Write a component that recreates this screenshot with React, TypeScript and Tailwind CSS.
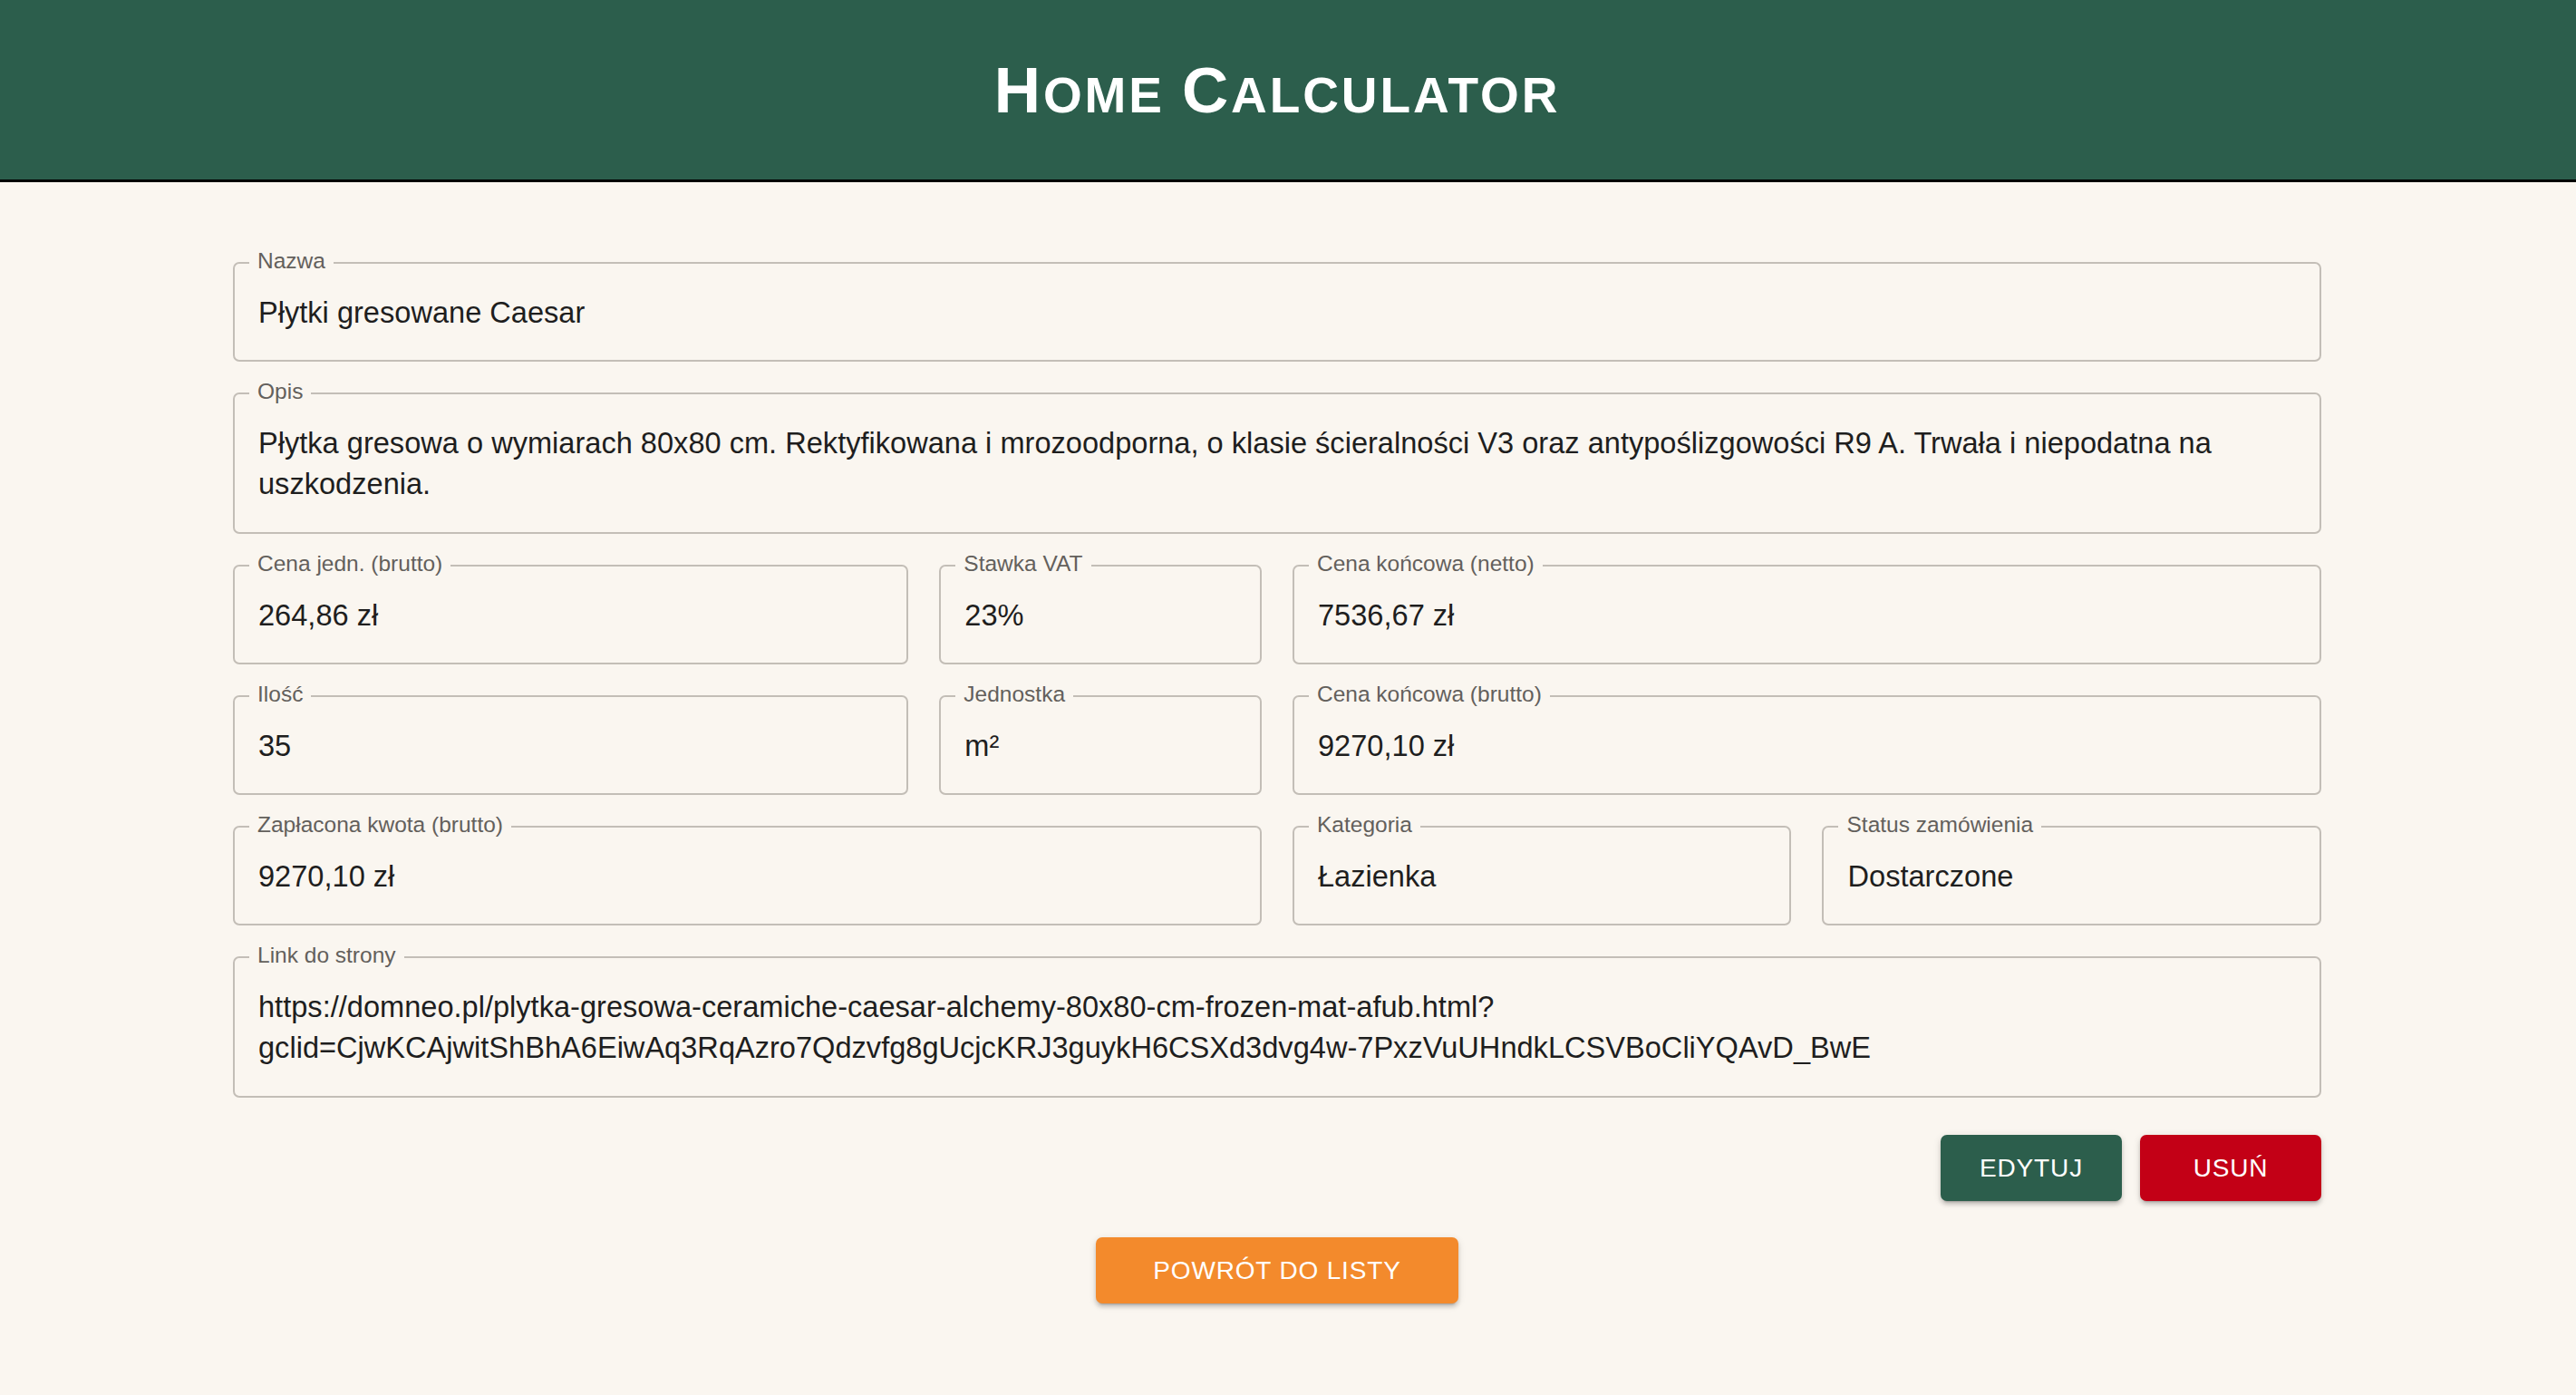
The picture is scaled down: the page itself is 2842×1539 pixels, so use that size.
import React from 'react';

interface FieldProps {
  label: string;
  value: React.ReactNode;
  span: string;
  multiline?: boolean;
}

const Field: React.FC<FieldProps> = ({ label, value, span, multiline = false }) => (
  <div className={`relative ${span}`}>
    {/* notched label sits on the top border */}
    <span className="absolute -top-[13px] left-[18px] px-[9px] bg-[#faf6f0] text-[24.5px] leading-[24px] text-[#63605c] whitespace-nowrap">
      {label}
    </span>
    <div
      className={`border-2 border-[#c3beb7] rounded-[7px] px-[26px] pt-[31px] ${
        multiline ? 'pb-[31px]' : 'pb-[30px]'
      } text-[32.6px] leading-[45px] text-[#1e1e1e]`}
    >
      {value}
    </div>
  </div>
);

const btnShadow =
  'shadow-[0_5px_2px_-4px_rgba(0,0,0,0.2),0_4px_4px_0_rgba(0,0,0,0.14),0_2px_9px_0_rgba(0,0,0,0.12)]';

export default function App() {
  return (
    <div className="min-h-screen bg-[#faf6f0] font-['Liberation_Sans',Arial,sans-serif]">
      {/* Header */}
      <header className="h-[201px] bg-[#2c5e4c] border-b-[3px] border-black flex items-center justify-center pr-[24px]">
        <h1 className="text-white font-bold leading-none tracking-[2.9px] uppercase flex items-baseline">
          <span className="text-[71px]">H</span>
          <span className="text-[55px]">ome</span>
          <span className="text-[71px] ml-[19px]">C</span>
          <span className="text-[55px]">alculator</span>
        </h1>
      </header>

      <main className="pr-[24px] pb-[80px]">
        <div className="mx-auto w-[2304px] pt-[88px]">
          <div className="grid grid-cols-12 gap-[34px]">
            <Field span="col-span-12" label="Nazwa" value="Płytki gresowane Caesar" />
            <Field
              span="col-span-12"
              multiline
              label="Opis"
              value="Płytka gresowa o wymiarach 80x80 cm. Rektyfikowana i mrozoodporna, o klasie ścieralności V3 oraz antypoślizgowości R9 A. Trwała i niepodatna na uszkodzenia."
            />

            <Field span="col-span-4" label="Cena jedn. (brutto)" value="264,86 zł" />
            <Field span="col-span-2" label="Stawka VAT" value="23%" />
            <Field span="col-span-6" label="Cena końcowa (netto)" value="7536,67 zł" />

            <Field span="col-span-4" label="Ilość" value="35" />
            <Field span="col-span-2" label="Jednostka" value="m²" />
            <Field span="col-span-6" label="Cena końcowa (brutto)" value="9270,10 zł" />

            <Field span="col-span-6" label="Zapłacona kwota (brutto)" value="9270,10 zł" />
            <Field span="col-span-3" label="Kategoria" value="Łazienka" />
            <Field span="col-span-3" label="Status zamówienia" value="Dostarczone" />

            <Field
              span="col-span-12"
              multiline
              label="Link do strony"
              value="https://domneo.pl/plytka-gresowa-ceramiche-caesar-alchemy-80x80-cm-frozen-mat-afub.html?gclid=CjwKCAjwitShBhA6EiwAq3RqAzro7Qdzvfg8gUcjcKRJ3guykH6CSXd3dvg4w-7PxzVuUHndkLCSVBoCliYQAvD_BwE"
            />
          </div>

          {/* Actions */}
          <div className="flex justify-end gap-[20px] mt-[41px]">
            <button className={`w-[200px] h-[73px] rounded-[7px] bg-[#2c5e4c] text-white text-[28px] tracking-[0.03em] uppercase ${btnShadow}`}>
              Edytuj
            </button>
            <button className={`w-[200px] h-[73px] rounded-[7px] bg-[#c30016] text-white text-[28px] tracking-[0.03em] uppercase ${btnShadow}`}>
              Usuń
            </button>
          </div>

          <div className="flex justify-center mt-[40px]">
            <button className={`w-[400px] h-[73px] rounded-[7px] bg-[#f38a2c] text-white text-[28px] tracking-[0.03em] uppercase ${btnShadow}`}>
              Powrót do listy
            </button>
          </div>
        </div>
      </main>
    </div>
  );
}
